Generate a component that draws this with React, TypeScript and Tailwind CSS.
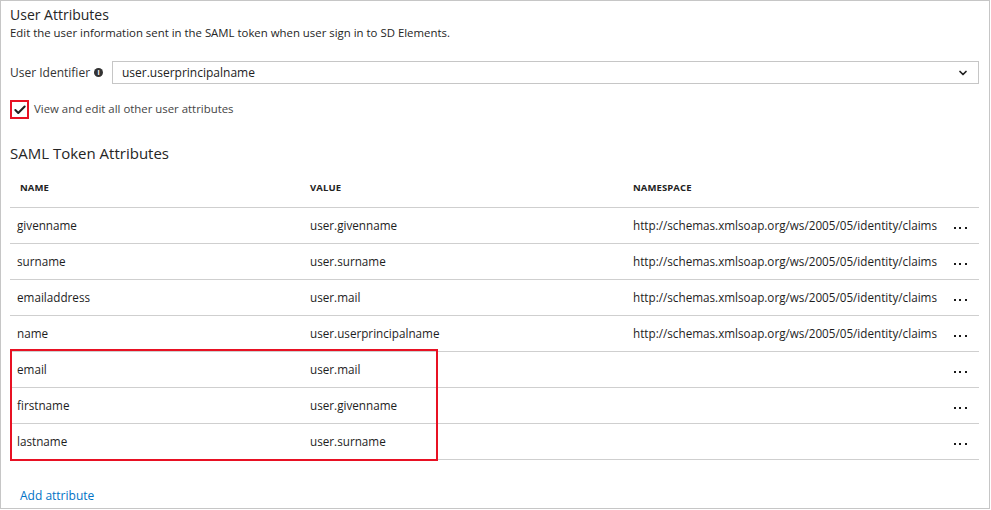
import { ChevronDown, Check } from 'lucide-react';

interface Attr {
  name: string;
  value: string;
  namespace: string;
}

const attrs: Attr[] = [
  { name: 'givenname', value: 'user.givenname', namespace: 'http://schemas.xmlsoap.org/ws/2005/05/identity/claims' },
  { name: 'surname', value: 'user.surname', namespace: 'http://schemas.xmlsoap.org/ws/2005/05/identity/claims' },
  { name: 'emailaddress', value: 'user.mail', namespace: 'http://schemas.xmlsoap.org/ws/2005/05/identity/claims' },
  { name: 'name', value: 'user.userprincipalname', namespace: 'http://schemas.xmlsoap.org/ws/2005/05/identity/claims' },
  { name: 'email', value: 'user.mail', namespace: '' },
  { name: 'firstname', value: 'user.givenname', namespace: '' },
  { name: 'lastname', value: 'user.surname', namespace: '' },
];

const Dots = () => (
  <div className="flex items-center gap-[3.5px] pt-[4px]">
    <span className="w-[2px] h-[2px] bg-[#1a1a1a]" />
    <span className="w-[2px] h-[2px] bg-[#1a1a1a]" />
    <span className="w-[2px] h-[2px] bg-[#1a1a1a]" />
  </div>
);

const App = () => {
  return (
    <div className="w-[991px] h-[510px] bg-white font-['Open_Sans',sans-serif] text-[#333]">
      <div className="w-[990px] h-[509px] border border-[#c6c6c6] relative pl-[9px] pr-[10px]">
        {/* Header */}
        <div className="pt-[4px] text-[14px] leading-[20px] text-[#252525]">User Attributes</div>
        <div className="text-[11.4px] leading-[16px] text-[#252525]">
          Edit the user information sent in the SAML token when user sign in to SD Elements.
        </div>

        {/* User identifier */}
        <div className="flex items-center mt-[20px]">
          <div className="w-[102px] flex items-center gap-[4px] text-[12px] text-[#333]">
            User Identifier
            <span className="w-[9px] h-[9px] rounded-full bg-[#333] text-white text-[7px] leading-[9px] font-bold flex items-center justify-center">i</span>
          </div>
          <div className="flex-1 h-[23px] border border-[#c6c6c6] flex items-center justify-between pl-[9px] pr-[9px] text-[12px] text-[#222]">
            <span>user.userprincipalname</span>
            <ChevronDown size={12} strokeWidth={3.5} className="text-[#222]" />
          </div>
        </div>

        {/* Checkbox */}
        <div className="flex items-center gap-[5px] mt-[16px]">
          <div className="w-[19px] h-[19px] border-2 border-[#e81123] flex items-center justify-center">
            <Check size={14} strokeWidth={3.5} className="text-[#222]" />
          </div>
          <span className="text-[11.4px] text-[#444] pb-[2px]">View and edit all other user attributes</span>
        </div>

        {/* SAML Token Attributes */}
        <div className="mt-[24px] text-[15px] leading-[20px] text-[#252525]">SAML Token Attributes</div>

        <div className="relative mt-[6px]">
          <div className="grid grid-cols-[300px_323px_1fr_36px] h-[39px] items-center border-b border-[#cfcfcf] text-[9.5px] font-bold text-[#222] tracking-[0.1px]">
            <div className="pl-[10px]">NAME</div>
            <div>VALUE</div>
            <div>NAMESPACE</div>
            <div />
          </div>
          {attrs.map((a) => (
            <div
              key={a.name}
              className="grid grid-cols-[300px_323px_1fr_36px] h-[36px] items-center border-b border-[#cfcfcf] text-[11.7px] text-[#1e1e1e]"
            >
              <div className="pl-[7px]">{a.name}</div>
              <div>{a.value}</div>
              <div className="whitespace-nowrap">{a.namespace}</div>
              <div className="flex justify-center pr-[2px]">
                <Dots />
              </div>
            </div>
          ))}
          {/* highlight */}
          <div className="absolute left-0 top-[180px] w-[428px] h-[112px] border-2 border-[#e81123] pointer-events-none" />
        </div>

        <div className="mt-[27px] pl-[10px] text-[12px] text-[#0072c6]">Add attribute</div>
      </div>
    </div>
  );
};

export default App;
